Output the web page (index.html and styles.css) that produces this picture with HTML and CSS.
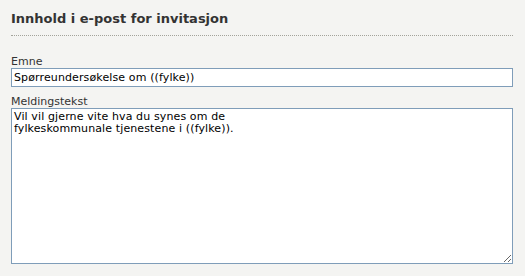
FILE: index.html
```html
<!DOCTYPE html>
<html lang="no">
<head>
<meta charset="utf-8">
<title>Innhold i e-post for invitasjon</title>
<link rel="stylesheet" href="styles.css">
</head>
<body>
<section class="panel">
  <h2 class="panel-title">Innhold i e-post for invitasjon</h2>
  <div class="field field-first">
    <label class="field-label" for="emne">Emne</label>
    <input class="field-input" id="emne" type="text" value="Spørreundersøkelse om ((fylke))">
  </div>
  <div class="field">
    <label class="field-label" for="melding">Meldingstekst</label>
    <textarea class="field-textarea" id="melding">Vil vil gjerne vite hva du synes om de
fylkeskommunale tjenestene i ((fylke)).</textarea>
  </div>
</section>
</body>
</html>
```
FILE: styles.css
```css
html, body {
  margin: 0;
  padding: 0;
  background: #f4f4f2;
}
body {
  font-family: "DejaVu Sans", Verdana, sans-serif;
  color: #222;
}
.panel {
  padding: 0 12px 0 11px;
}
.panel-title {
  margin: 0;
  padding-top: 10px;
  padding-bottom: 8px;
  font-size: 13px;
  line-height: 17px;
  font-weight: bold;
  color: #333;
  border-bottom: 1px dotted #a3a39b;
}
.field {
  display: flex;
  flex-direction: column;
  margin-top: 8px;
}
.field-first {
  margin-top: 19px;
}
.field-label {
  font-size: 11px;
  line-height: 13px;
  color: #333;
}
.field-input,
.field-textarea {
  box-sizing: border-box;
  width: 100%;
  margin: 0;
  border: 1px solid #7f9db9;
  background: #fff;
  font-family: "DejaVu Sans", Verdana, sans-serif;
  font-size: 11px;
  letter-spacing: 0.12px;
  color: #000;
  outline: none;
}
.field-input {
  height: 19px;
  padding: 1px 2px;
  line-height: 13px;
}
.field-textarea {
  height: 156px;
  padding: 2px 2px;
  line-height: 12px;
  resize: both;
  display: block;
}
```
